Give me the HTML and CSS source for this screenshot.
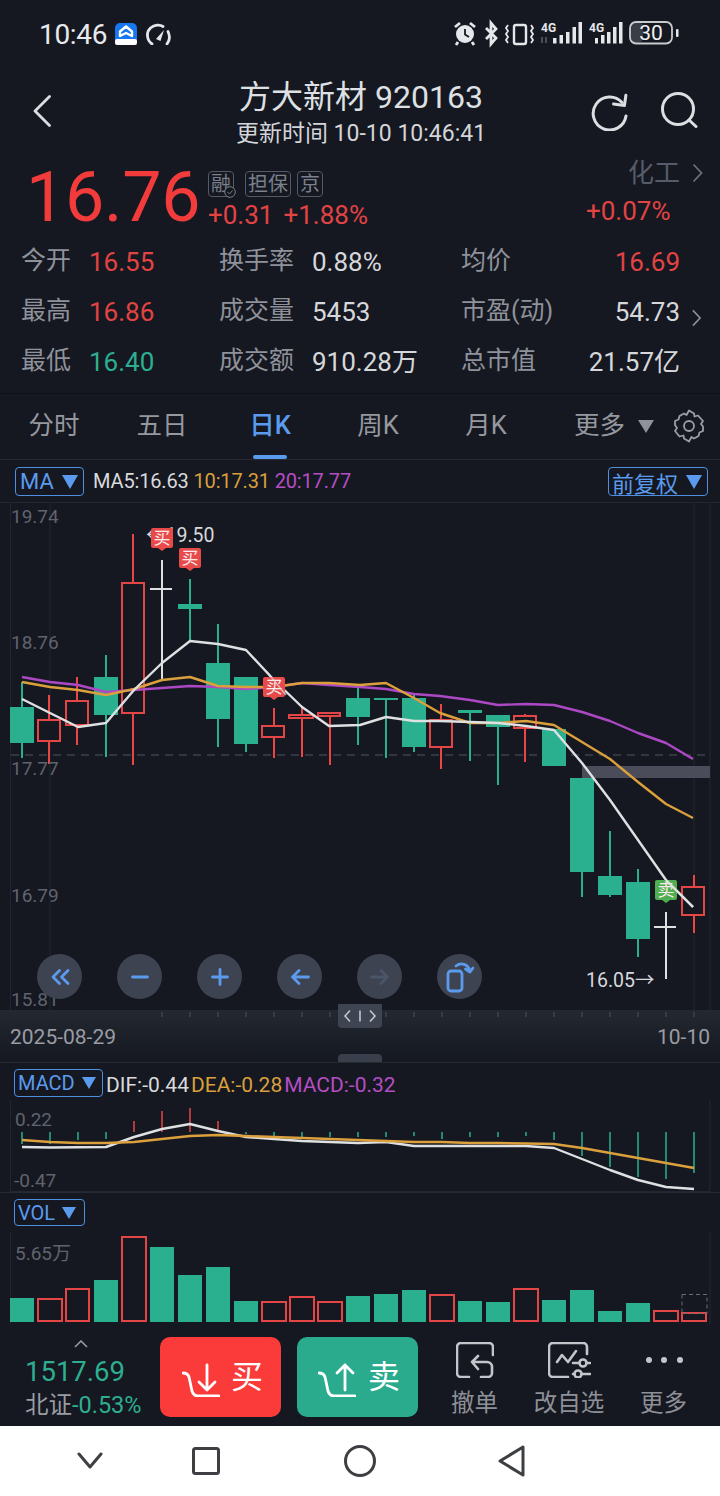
FILE: index.html
```html
<!DOCTYPE html>
<html lang="zh">
<head>
<meta charset="utf-8">
<title>方大新材 920163</title>
<link rel="stylesheet" href="styles.css">
</head>
<body>
<div class="screen">
  <div class="status">
    <div class="status-left">
      <span class="clock">10:46</span>
      <svg class="ic-app" viewBox="0 0 22 22"><rect width="22" height="22" rx="5" fill="#1677ee"/><rect y="16" width="22" height="6" rx="2" fill="#fff"/><path d="M11 3.500 17 8.500V13L11 10 5 13V8.500Z" fill="none" stroke="#fff" stroke-width="2.400" stroke-linejoin="round"/></svg>
      <svg class="ic-gauge" viewBox="0 0 26 22"><path d="M7 21C1.500 17 1 9 5.500 5 9.500 1.500 15 1.500 18 3.500M23 8.500C25 13 24.500 18 22 21" fill="none" stroke="#e6e7ea" stroke-width="2.800" stroke-linecap="round"/><path d="M11 16 19 7 15.500 18Z" fill="#e6e7ea"/></svg>
    </div>
    <svg class="status-right" viewBox="453 18 227 30">
      <circle cx="465" cy="34" r="9" fill="#e6e7ea"/><path d="M465 29V34.500L469 37" fill="none" stroke="#151821" stroke-width="1.800"/><path d="M455 27 460 23M475 27 470 23M458 42 456 45M472 42 474 45" stroke="#e6e7ea" stroke-width="2.800"/>
      <path d="M486 28 496 38 491 44V23L496 29 486 39" fill="none" stroke="#e6e7ea" stroke-width="2.800"/>
      <rect x="514" y="25" width="12" height="19" rx="2" fill="none" stroke="#e6e7ea" stroke-width="2.400"/>
      <path d="M508 25 506 28 508 31 506 34 508 37 506 40 508 43M531 25 533 28 531 31 533 34 531 37 533 40 531 43" fill="none" stroke="#e6e7ea" stroke-width="1.800"/>
      <text class="sb-4g" x="541" y="32">4G</text>
      <path d="M542 37V43M546 37V43" stroke="#5c606a" stroke-width="1.500"/>
      <path class="sb-bars" d="M553 38H556.500V43.500H553ZM559.500 35H563V43.500H559.500ZM566 32H569.500V43.500H566ZM572.500 27H576V43.500H572.500ZM578.500 22H582V43.500H578.500Z"/>
      <text class="sb-4g" x="589" y="32">4G</text>
      <path class="sb-bars" d="M595 38H598V43.500H595ZM601 35H604.500V43.500H601ZM607 32H610.500V43.500H607ZM613 27H616.500V43.500H613ZM619 22H622.500V43.500H619Z"/>
      <rect x="630" y="22" width="13" height="21" rx="5" fill="#3a3d45"/>
      <rect x="630" y="22" width="42" height="21.500" rx="6" fill="none" stroke="#c9cacd" stroke-width="1.800"/>
      <text class="sb-batt" x="651" y="40">30</text>
      <rect x="676" y="29" width="2.500" height="8" rx="1" fill="#e6e7ea"/>
    </svg>
  </div>

  <header class="head">
    <svg class="ic-back" viewBox="0 0 18 32"><path d="M16.500 1.500 2 16 16.500 30.500" fill="none" stroke="#dcdee2" stroke-width="2.800" stroke-linecap="round" stroke-linejoin="round"/></svg>
    <div class="head-mid">
      <div class="title">方大新材 920163</div>
      <div class="subtitle">更新时间 10-10 10:46:41</div>
    </div>
    <svg class="ic-refresh" viewBox="0 0 38 38"><path d="M31 9.500A16.500 16.500 0 1 0 35 23" fill="none" stroke="#dcdee2" stroke-width="3" stroke-linecap="round"/><path d="M22.500 12.500H33.500V2" fill="none" stroke="#dcdee2" stroke-width="3" stroke-linecap="round" stroke-linejoin="round" transform="rotate(8 33 12)"/></svg>
    <svg class="ic-search" viewBox="0 0 38 36"><circle cx="18" cy="17" r="15.500" fill="none" stroke="#dcdee2" stroke-width="3"/><path d="M29 28 36 34.500" stroke="#dcdee2" stroke-width="3" stroke-linecap="round"/></svg>
  </header>

  <section class="quote">
    <div class="price">16.76</div>
    <div class="quote-mid">
      <div class="tags">
        <span class="tag tag-rong">融<svg class="tag-check" viewBox="0 0 12 12"><circle cx="6" cy="6" r="5.300" fill="#151821" stroke="#777c88"/><path d="M3.500 6 5.500 8 8.500 4.500" fill="none" stroke="#777c88"/></svg></span>
        <span class="tag">担保</span>
        <span class="tag">京</span>
      </div>
      <div class="changes"><span>+0.31</span><span>+1.88%</span></div>
    </div>
    <div class="sector">
      <div class="sector-name">化工<svg class="chev" viewBox="0 0 11 20"><path d="M1.500 1.500 9.500 10 1.500 18.500" fill="none" stroke="#6a6f7b" stroke-width="1.800"/></svg></div>
      <div class="sector-chg">+0.07%</div>
    </div>
  </section>

  <section class="stats">
    <span class="k">今开</span><span class="v up">16.55</span><span class="k">换手率</span><span class="v">0.88%</span><span class="k">均价</span><span class="v end up">16.69</span>
    <span class="k">最高</span><span class="v up">16.86</span><span class="k">成交量</span><span class="v">5453</span><span class="k">市盈(动)</span><span class="v end">54.73</span>
    <span class="k">最低</span><span class="v down">16.40</span><span class="k">成交额</span><span class="v">910.28万</span><span class="k">总市值</span><span class="v end">21.57亿</span>
    <svg class="stats-chev" viewBox="0 0 11 20"><path d="M1.500 1.500 9.500 10 1.500 18.500" fill="none" stroke="#8b8f99" stroke-width="1.800"/></svg>
  </section>

  <nav class="tabs">
    <span class="tab">分时</span>
    <span class="tab">五日</span>
    <span class="tab active">日K</span>
    <span class="tab">周K</span>
    <span class="tab">月K</span>
    <span class="tab tab-more">更多<i class="tri-grey"></i></span>
    <svg class="ic-gear" viewBox="0 0 32 34"><path d="M16 1.500 21 4.500 21.500 7.500 25 6.500 30 12 28 15 30 17.500 30 22 26.500 23.500 25.500 27 21 29.500 18.500 28 16 32.500 11 29.500 10.500 26.500 6.500 27.500 2 22 4 19 2 16 2 12 5.500 10.500 6.500 7 11 4.500 13.500 6Z" fill="none" stroke="#9b9ea5" stroke-width="1.800" stroke-linejoin="round"/><circle cx="16" cy="17" r="5" fill="none" stroke="#9b9ea5" stroke-width="1.800"/></svg>
  </nav>

  <section class="kline">
    <div class="kline-bar">
      <button class="pick pick-ma">MA<i class="tri"></i></button>
      <span class="legend legend-ma"><span class="c-w">MA5:16.63</span> <span class="c-o">10:17.31</span> <span class="c-p">20:17.77</span></span>
      <button class="pick pick-fq">前复权<i class="tri"></i></button>
    </div>
    <div class="kline-plot">
      <svg class="plot-main" viewBox="0 503 720 507">
        <path class="frame" d="M10.500 503V1010M50 503V1010M710 503V1010M694 503V1010"/>
        <path class="dash" d="M11 755H710"/>
        <rect class="zone" x="582" y="766" width="128" height="12"/>
        <g class="wk-g">
          <path d="M22 682V758M106 655V757M190 579V642M218 624V747M246 744V752M358 687V745M386 700V758M414 695V752M470 713V761M498 727V785M554 729V766M582 872V897M610 831V897M638 869V957"/>
        </g>
        <g class="wk-r">
          <path d="M49 695V764M77 677V745M133 534V765M274 708V758M302 707V757M330 713V765M441 704V769M525 714V762M694 875V933"/>
        </g>
        <g class="bd-g">
          <rect x="10" y="707" width="24" height="36"/><rect x="94" y="677" width="24" height="38"/><rect x="178" y="604" width="24" height="5"/><rect x="206" y="663" width="24" height="56"/><rect x="234" y="677" width="24" height="67"/><rect x="346" y="698" width="24" height="19"/><rect x="374" y="698" width="24" height="2"/><rect x="402" y="698" width="24" height="49"/><rect x="458" y="710" width="24" height="3"/><rect x="486" y="715" width="24" height="12"/><rect x="542" y="729" width="24" height="37"/><rect x="570" y="778" width="24" height="94"/><rect x="598" y="876" width="24" height="19"/><rect x="626" y="882" width="24" height="57"/>
        </g>
        <g class="bd-r">
          <rect x="38" y="720" width="22" height="21"/><rect x="66" y="701" width="22" height="24"/><rect x="122" y="583" width="22" height="130"/><rect x="262" y="726" width="22" height="11"/><rect x="289" y="715" width="24" height="3"/><rect x="318" y="713" width="22" height="3"/><rect x="430" y="720" width="22" height="27"/><rect x="514" y="716" width="22" height="12"/><rect x="682" y="887" width="22" height="28"/>
        </g>
        <path class="wk-w" d="M162 560V680M150 589H172M666 912V979M654 927H676"/>
        <path class="l-p" d="M22 677 50 682 78 685 106 692 134 690 162 688 190 686 218 687 246 689 274 687 302 683 329 685 360 687 386 689 414 694 440 696 470 700 498 705 526 704 554 705 582 712 610 721 638 733 666 743 693 759"/>
        <path class="l-o" d="M22 682 50 687 78 690 106 695 134 689 162 680 190 677 218 686 246 687 274 687 302 683 329 683 360 685 386 683 414 698 440 713 470 723 498 723 526 721 554 725 582 742 610 759 638 782 666 804 693 818"/>
        <path class="l-w" d="M22 699 78 727 106 723 134 690 162 663 190 641 218 644 246 650 274 680 302 707 329 726 360 725 386 717 414 721 440 721 470 722 498 723 526 726 554 730 582 763 610 800 638 840 666 880 693 907"/>
        <text class="ax" x="11" y="523">19.74</text>
        <text class="ax" x="11" y="649">18.76</text>
        <text class="ax" x="11" y="775">17.77</text>
        <text class="ax" x="11" y="902">16.79</text>
        <text class="ax" x="11" y="1006">15.81</text>
        <text class="mark" x="146" y="542">←19.50</text>
        <text class="mark" x="586" y="987">16.05→</text>
        <g class="flag-r"><path d="M153 528H171A2 2 0 0 1 173 530V546A2 2 0 0 1 171 548H166L162 551 158 548H153A2 2 0 0 1 151 546V530A2 2 0 0 1 153 528Z"/><text x="162" y="544">买</text></g>
        <g class="flag-r"><path d="M181 548H199A2 2 0 0 1 201 550V566A2 2 0 0 1 199 568H194L190 571 186 568H181A2 2 0 0 1 179 566V550A2 2 0 0 1 181 548Z"/><text x="190" y="564">买</text></g>
        <g class="flag-r"><path d="M265 677H283A2 2 0 0 1 285 679V695A2 2 0 0 1 283 697H278L274 700 270 697H265A2 2 0 0 1 263 695V679A2 2 0 0 1 265 677Z"/><text x="274" y="693">买</text></g>
        <path class="l-w l-thin" d="M267 672 286 695"/>
        <g class="flag-g"><path d="M657 880H675A2 2 0 0 1 677 882V898A2 2 0 0 1 675 900H670L666 903 662 900H657A2 2 0 0 1 655 898V882A2 2 0 0 1 657 880Z"/><text x="666" y="896">卖</text></g>
        <path class="l-w" d="M666 880 693 907"/>
      </svg>
      <div class="ctrls">
        <span class="ctrl"><svg viewBox="0 0 20 20"><path d="M9.500 3.500 3 10 9.500 16.500M18 3.500 11.500 10 18 16.500" class="ci"/></svg></span>
        <span class="ctrl"><svg viewBox="0 0 20 20"><path d="M2.500 10H17.500" class="ci"/></svg></span>
        <span class="ctrl"><svg viewBox="0 0 20 20"><path d="M2.500 10H17.500M10 2.500V17.500" class="ci"/></svg></span>
        <span class="ctrl"><svg viewBox="0 0 20 20"><path d="M18.500 10H2.500M9 3.500 2.500 10 9 16.500" class="ci"/></svg></span>
        <span class="ctrl"><svg viewBox="0 0 20 20"><path d="M1.500 10H17.500M11 3.500 17.500 10 11 16.500" class="ci ci-off"/></svg></span>
        <span class="ctrl ctrl-rot"><svg viewBox="0 0 28 32"><rect x="2" y="10" width="14" height="20" rx="3" class="ci"/><path d="M10 5C15 1 22 3 24 10M19.500 8 24 11 27 7" class="ci"/></svg></span>
      </div>
    </div>
    <div class="timeline">
      <svg class="ticks" viewBox="0 1010 720 20"><path d="M162 1012V1017M190 1012V1017M218 1012V1017M246 1012V1017M274 1012V1017M302 1012V1017M330 1012V1017M386 1012V1017M414 1012V1017M442 1012V1017M470 1012V1017M498 1012V1017M526 1012V1017M554 1012V1017M582 1012V1017M610 1012V1017M638 1012V1017M666 1012V1017M694 1012V1017"/></svg>
      <span class="grip"><svg viewBox="0 0 36 14"><path d="M8 1.500 3 7 8 12.500M28 1.500 33 7 28 12.500M18 1.500V12.500" fill="none" stroke="#c3c6ce" stroke-width="1.600"/></svg></span>
      <div class="dates"><span>2025-08-29</span><span>10-10</span></div>
      <span class="grip-low"></span>
    </div>
  </section>

  <section class="sub sub-macd">
    <div class="sub-bar">
      <button class="pick pick-macd">MACD<i class="tri"></i></button>
      <span class="legend legend-macd"><span class="c-w">DIF:-0.44</span><span class="c-o">DEA:-0.28</span><span class="c-p">MACD:-0.32</span></span>
    </div>
    <svg class="plot-macd" viewBox="0 1100 720 92">
      <path class="frame" d="M10.500 1100V1192M710 1100V1192M10 1191.500H710"/>
      <path class="m-g" d="M22 1132V1144M50 1132V1144M78 1132V1140M106 1132V1139M246 1132V1134M274 1132V1140M302 1132V1138M330 1132V1137M358 1132V1137M386 1132V1137M414 1132V1136M442 1132V1139M470 1132V1137M498 1132V1137M526 1132V1136M554 1132V1140M582 1132V1156M610 1132V1167M638 1132V1177M666 1132V1179M694 1132V1173"/>
      <path class="m-r" d="M134 1121V1132M162 1111V1132M190 1108V1132M218 1121V1132"/>
      <path class="l-w" d="M22 1147 50 1147.500 106 1147 134 1137 162 1129 190 1124 218 1131 246 1137 274 1139 302 1141 330 1142 358 1143 386 1142 414 1146 526 1146 554 1148 582 1159 610 1170 638 1180 666 1187 694 1189"/>
      <path class="l-o" d="M22 1140 50 1142 78 1143 106 1143 134 1142 162 1139 190 1136 218 1135 246 1136 274 1137 302 1138 330 1139 358 1140 386 1141 414 1142 442 1142 470 1143 498 1143 526 1143.500 554 1144 582 1148 610 1153 638 1158 666 1163 694 1168"/>
      <text class="ax" x="15" y="1126">0.22</text>
      <text class="ax" x="14" y="1187">-0.47</text>
    </svg>
  </section>

  <section class="sub sub-vol">
    <div class="sub-bar vol-bar">
      <button class="pick pick-vol">VOL<i class="tri"></i></button>
    </div>
    <svg class="plot-vol" viewBox="0 1232 720 92">
      <path class="frame" d="M10.500 1232V1324M710 1232V1324"/>
      <text class="ax" x="15" y="1260">5.65万</text>
      <g class="bd-g">
        <rect x="10" y="1298" width="24" height="24"/><rect x="94" y="1280" width="24" height="42"/><rect x="150" y="1247" width="24" height="75"/><rect x="178" y="1275" width="24" height="47"/><rect x="206" y="1267" width="24" height="55"/><rect x="234" y="1301" width="24" height="21"/><rect x="346" y="1296" width="24" height="26"/><rect x="374" y="1294" width="24" height="28"/><rect x="402" y="1290" width="24" height="32"/><rect x="458" y="1301" width="24" height="21"/><rect x="486" y="1302" width="24" height="20"/><rect x="542" y="1300" width="24" height="22"/><rect x="570" y="1290" width="24" height="32"/><rect x="598" y="1311" width="24" height="11"/><rect x="626" y="1303" width="24" height="19"/>
      </g>
      <g class="bd-r">
        <rect x="38" y="1299" width="24" height="22"/><rect x="66" y="1289" width="23" height="32"/><rect x="122" y="1237" width="24" height="84"/><rect x="262" y="1302" width="24" height="19"/><rect x="290" y="1297" width="24" height="24"/><rect x="318" y="1302" width="24" height="19"/><rect x="430" y="1295" width="24" height="26"/><rect x="514" y="1289" width="24" height="32"/><rect x="654" y="1311" width="24" height="10"/><rect x="682" y="1313" width="24" height="8"/>
      </g>
      <rect class="vol-ghost" x="682" y="1294.500" width="25" height="19"/>
    </svg>
  </section>

  <footer class="trade">
    <div class="index">
      <svg class="ic-up" viewBox="0 0 14 8"><path d="M1 7 7 1 13 7" fill="none" stroke="#9b9ea5" stroke-width="1.500"/></svg>
      <div class="index-val">1517.69</div>
      <div class="index-chg">北证<span class="down">-0.53%</span></div>
    </div>
    <button class="deal deal-buy"><svg viewBox="0 0 38 34"><path d="M1 10C4 10 6 11 7 14L10 28C11 31 13 33 16 33H37" class="di"/><path d="M25 2V27M17 19 25 27 33 19" class="di"/></svg><span>买</span></button>
    <button class="deal deal-sell"><svg viewBox="0 0 38 34"><path d="M1 10C4 10 6 11 7 14L10 28C11 31 13 33 16 33H37" class="di"/><path d="M27 27V2M19 10 27 2 35 10" class="di"/></svg><span>卖</span></button>
    <div class="act act-undo"><svg viewBox="0 0 38 36"><path d="M13 35H5A4 4 0 0 1 1 31V5A4 4 0 0 1 5 1H33A4 4 0 0 1 37 5V13" class="ai"/><path d="M22 14 16 20 22 27M16 20H31A5 5 0 0 1 36 25V31A4 4 0 0 1 32 35H25" class="ai"/></svg><span>撤单</span></div>
    <div class="act act-edit"><svg viewBox="0 0 43 36"><path d="M20 35H5A4 4 0 0 1 1 31V5A4 4 0 0 1 5 1H35A4 4 0 0 1 39 5V12" class="ai"/><path d="M9 20 14 13 20 20 28 9" class="ai"/><path d="M25 21H42M25 32H42" class="ai"/><circle cx="35" cy="21" r="3.500" class="ai ai-f"/><circle cx="30" cy="32" r="3.500" class="ai ai-f"/></svg><span>改自选</span></div>
    <div class="act act-more"><svg viewBox="0 0 38 8"><circle cx="4" cy="4" r="3" fill="#c3c5ca"/><circle cx="19" cy="4" r="3" fill="#c3c5ca"/><circle cx="35" cy="4" r="3" fill="#c3c5ca"/></svg><span>更多</span></div>
  </footer>

  <div class="navbar">
    <svg class="nv-a" viewBox="0 0 26 18"><path d="M2 2 13 15 24 2" class="nv"/></svg>
    <svg class="nv-b" viewBox="0 0 28 28"><rect x="1.500" y="1.500" width="25" height="25" rx="2" class="nv"/></svg>
    <svg class="nv-c" viewBox="0 0 32 32"><circle cx="16" cy="16" r="14.500" class="nv"/></svg>
    <svg class="nv-d" viewBox="0 0 28 32"><path d="M25 2V30L2 16Z" class="nv"/></svg>
  </div>
</div>
</body>
</html>
```
FILE: styles.css
```css
* { box-sizing: border-box; }
html, body { margin: 0; padding: 0; background: #151821; }
body { font-family: Roboto, "Noto Sans CJK SC", sans-serif; color: #e2e3e6; }
.screen { width: 720px; height: 1496px; display: flex; flex-direction: column; overflow: hidden; }
svg { display: block; }
button { font-family: inherit; background: none; cursor: default; }

/* status bar */
.status { height: 70px; flex: none; display: flex; justify-content: space-between; padding: 18px 40px 0 39px; }
.status-left { display: flex; align-items: flex-start; height: 30px; }
.clock { font-size: 28px; line-height: 34px; letter-spacing: -0.3px; color: #e8e9eb; }
.ic-app { width: 22px; height: 22px; margin: 5px 0 0 8px; }
.ic-gauge { width: 26px; height: 22px; margin: 5px 0 0 8px; }
.status-right { width: 227px; height: 30px; }
.sb-4g { font-size: 12px; font-weight: 700; fill: #e6e7ea; }
.sb-bars { fill: #e6e7ea; }
.sb-batt { font-size: 21px; text-anchor: middle; fill: #f0f0f0; }

/* header */
.head { height: 80px; flex: none; display: flex; align-items: flex-start; padding: 0 22px 0 33px; }
.ic-back { width: 18px; height: 32px; margin-top: 25px; flex: none; }
.head-mid { flex: 1; min-width: 0; padding-left: 80px; text-align: center; white-space: nowrap; }
.title { font-size: 32px; line-height: 36px; margin-top: 9px; color: #dfe0e3; }
.subtitle { font-size: 23px; line-height: 28px; margin-top: 5px; color: #d3d5d9; }
.ic-refresh { width: 38px; height: 38px; margin-top: 23px; flex: none; }
.ic-search { width: 38px; height: 36px; margin: 22px 0 0 31px; flex: none; }

/* quote */
.quote { height: 87px; flex: none; display: flex; padding-left: 26px; position: relative; }
.price { font-size: 70px; line-height: 82px; color: #f23c3c; width: 182px; margin-top: 6px; letter-spacing: -0.3px; }
.quote-mid { width: 200px; }
.tags { display: flex; gap: 11px; margin-top: 21px; }
.tags .tag:last-child { margin-left: -5px; }
.tag { position: relative; height: 26px; padding: 0 2px; border: 1px solid #555a66; border-radius: 4px; font-size: 20px; line-height: 24px; color: #7b808c; }
.tag-check { position: absolute; right: -3px; bottom: -2px; width: 12px; height: 12px; }
.changes { display: flex; gap: 10px; margin-top: 2px; font-size: 26px; line-height: 32px; color: #e24343; }
.sector { margin-left: auto; padding-right: 18px; width: 134px; }
.sector-name { display: flex; align-items: center; font-size: 26px; line-height: 36px; color: #565b67; margin-top: 5px; padding-left: 42px; white-space: nowrap; }
.chev { width: 11px; height: 20px; margin-left: 12px; flex: none; }
.sector-chg { font-size: 26px; line-height: 32px; color: #e24343; margin-top: 4px; }

/* stats */
.stats { height: 156px; flex: none; display: grid; grid-template-columns: 68px 130px 93px 149px 100px 119px; grid-auto-rows: 50px; align-items: center; padding-left: 21px; position: relative; }
.k { font-size: 25px; line-height: 30px; color: #8f929a; white-space: nowrap; margin-top: -2px; }
.v { font-size: 26px; line-height: 30px; color: #d6d7da; white-space: nowrap; }
.v.end { text-align: right; }
.up { color: #e24343; }
.down { color: #2dae90; }
.v.down { color: #2dae90; }
.v.up { color: #e24343; }
.stats-chev { position: absolute; left: 691px; top: 72px; width: 11px; height: 18px; }

/* tabs */
.tabs { height: 67px; flex: none; display: flex; align-items: center; position: relative; border-top: 1px solid #0e1117; border-bottom: 1px solid #262a33; }
.tab { width: 108px; text-align: center; font-size: 25.500px; color: #96989f; position: relative; height: 100%; line-height: 63px; }
.tab.active { color: #5b9bee; font-weight: 500; }
.tab.active::after { content: ""; position: absolute; left: 37px; bottom: 0; width: 34px; height: 4px; border-radius: 2px; background: #5b9bee; }
.tab-more { width: 130px; white-space: nowrap; margin-left: 9px; }
.tri-grey { display: inline-block; margin-left: 13px; border-left: 8px solid transparent; border-right: 8px solid transparent; border-top: 13px solid #8f929a; vertical-align: 1px; }
.ic-gear { width: 32px; height: 34px; position: absolute; left: 673px; top: 15px; }

/* kline */
.kline { flex: none; }
.kline-bar { height: 43px; display: flex; align-items: flex-start; padding: 7px 12px 0 15px; border-bottom: 1px solid #22262f; }
.pick { border: 1px solid #4f8fe0; border-radius: 4px; color: #5b9bee; height: 29px; padding: 0 5px; display: flex; align-items: center; font-size: 22px; white-space: nowrap; }
.tri { display: inline-block; margin-left: 8px; border-left: 8px solid transparent; border-right: 8px solid transparent; border-top: 14px solid #5b9bee; }
.pick-ma { width: 69px; padding: 0 4px; }
.pick-fq { width: 100px; margin-left: auto; padding: 0 3px; }
.pick-fq .tri { margin-left: 8px; }
.legend { white-space: nowrap; font-size: 20px; }
.legend-ma { margin-left: 9px; line-height: 29px; letter-spacing: -0.15px; }
.c-w { color: #d9dadc; }
.c-o { color: #d99f3c; }
.c-p { color: #b44ec4; }
.kline-plot { position: relative; height: 507px; }
.plot-main { width: 720px; height: 507px; }
.frame { stroke: #22262f; stroke-width: 1; fill: none; }
.dash { stroke: #3b404c; stroke-width: 1.500; stroke-dasharray: 8 6; fill: none; }
.zone { fill: #4a4c59; }
.wk-g path { stroke: #2bb08f; stroke-width: 2; fill: none; }
.wk-r path { stroke: #ec4545; stroke-width: 2; fill: none; }
.bd-g rect { fill: #2bb08f; }
.bd-r rect { fill: #151821; stroke: #e44545; stroke-width: 2; }
.wk-w { stroke: #dfe0e2; stroke-width: 2; fill: none; }
.l-p { stroke: #ad48c4; stroke-width: 2.400; fill: none; stroke-linejoin: round; }
.l-o { stroke: #dba03c; stroke-width: 2.400; fill: none; stroke-linejoin: round; }
.l-w { stroke: #dfe0e2; stroke-width: 2.400; fill: none; stroke-linejoin: round; }
.l-thin { stroke-width: 1.500; opacity: 0.7; }
.ax { font-size: 19px; fill: #5f636e; }
.mark { font-size: 19.500px; fill: #d8d9dc; }
.flag-r path { fill: #e84a4a; }
.flag-g path { fill: #4fae50; }
.flag-r text, .flag-g text { font-size: 17px; text-anchor: middle; fill: #fbeaea; }
.ctrls { position: absolute; left: 37px; top: 451px; display: flex; gap: 35px; }
.ctrl { width: 45px; height: 45px; border-radius: 50%; background: #3e4352; display: flex; align-items: center; justify-content: center; }
.ctrl svg { width: 20px; height: 20px; }
.ctrl-rot svg { width: 28px; height: 32px; }
.ci { fill: none; stroke: #5b9bee; stroke-width: 2.800; stroke-linecap: round; stroke-linejoin: round; }
.ci-off { stroke: #4b5568; }

.timeline { position: relative; height: 52px; background: linear-gradient(#242830 0, #1a1e27 60%, #151821 100%); }
.ticks { width: 720px; height: 20px; }
.ticks path { stroke: #4e535f; stroke-width: 1; fill: none; }
.grip { position: absolute; left: 338px; top: -6px; width: 44px; height: 24px; border-radius: 0 0 4px 4px; background: #3f4453; display: flex; align-items: center; justify-content: center; }
.grip svg { width: 36px; height: 14px; }
.dates { display: flex; justify-content: space-between; padding: 0 10px; font-size: 21px; line-height: 28px; color: #9a9ca3; margin-top: -7px; }
.grip-low { position: absolute; left: 338px; bottom: 0; width: 44px; height: 8px; border-radius: 4px 4px 0 0; background: #3a3f4c; }

/* sub panels */
.sub { flex: none; }
.sub-macd { height: 130px; }
.sub-vol { height: 132px; }
.sub-bar { height: 38px; display: flex; align-items: flex-start; padding: 6px 0 0 14px; border-top: 1px solid #262a33; }
.vol-bar { height: 40px; padding-top: 6px; }
.pick-macd { width: 89px; height: 28px; padding: 0 3px; font-size: 20px; }
.pick-macd .tri { margin-left: 7px; border-left-width: 7px; border-right-width: 7px; border-top-width: 12px; }
.pick-vol { width: 71px; height: 27px; padding: 0 3px; font-size: 20px; }
.pick-vol .tri { margin-left: 7px; border-left-width: 7px; border-right-width: 7px; border-top-width: 12px; }
.legend-macd { display: flex; gap: 2px; margin-left: 3px; line-height: 32px; font-size: 21px; }
.plot-macd { width: 720px; height: 92px; }
.plot-vol { width: 720px; height: 92px; }
.m-g { stroke: #2bb08f; stroke-width: 1.500; fill: none; }
.m-r { stroke: #e44545; stroke-width: 1.500; fill: none; }
.vol-ghost { fill: none; stroke: #6a6d76; stroke-width: 1; stroke-dasharray: 4 3; }

/* trade bar */
.trade { height: 102px; flex: none; display: flex; align-items: flex-start; }
.index { width: 160px; padding-left: 25px; }
.ic-up { width: 14px; height: 8px; margin: 16px 0 0 49px; }
.index-val { font-size: 27.500px; line-height: 34px; color: #2dae90; margin-top: 7px; }
.index-chg { font-size: 23.500px; line-height: 30px; color: #9a9ca3; margin-top: 1px; white-space: nowrap; }
.deal { width: 121px; height: 80px; margin-top: 13px; border: 0; border-radius: 10px; display: flex; align-items: center; gap: 11px; padding: 0 0 0 22px; color: #fff; font-size: 32px; }
.deal svg { width: 38px; height: 34px; flex: none; margin-top: 5px; }
.deal span { line-height: 40px; }
.deal-buy { background: #fb3a3a; }
.deal-sell { background: #2bab8e; margin-left: 16px; padding-left: 21px; gap: 12px; }
.di { fill: none; stroke: #fff; stroke-width: 2.800; stroke-linecap: round; stroke-linejoin: round; }
.act { display: flex; flex-direction: column; align-items: center; font-size: 23.500px; color: #8e9097; white-space: nowrap; }
.act svg { margin-top: 18px; flex: none; }
.act span { line-height: 32px; }
.act-undo { width: 47px; margin-left: 33px; }
.act-undo svg { width: 38px; height: 36px; margin-bottom: 9px; margin-left: 1px; }
.act-edit { width: 70px; margin-left: 36px; }
.act-edit svg { width: 43px; height: 36px; margin-bottom: 9px; margin-left: 1px; }
.act-more { width: 47px; margin-left: 36px; }
.act.act-more svg { width: 38px; height: 8px; margin-top: 32px; margin-bottom: 23px; }
.ai { fill: none; stroke: #c3c5ca; stroke-width: 2.600; stroke-linecap: round; stroke-linejoin: round; }
.ai-f { fill: #151821; }

/* nav */
.navbar { height: 70px; flex: none; background: #fff; display: flex; align-items: center; position: relative; padding-left: 77px; }
.navbar svg { flex: none; }
.nv { fill: none; stroke: #3d3f43; stroke-width: 3; stroke-linejoin: round; stroke-linecap: round; }
.nv-a { width: 26px; height: 18px; }
.nv-b { width: 28px; height: 28px; margin-left: 89px; }
.nv-c { width: 32px; height: 32px; margin-left: 124px; }
.nv-d { width: 28px; height: 32px; margin-left: 122px; }
```
